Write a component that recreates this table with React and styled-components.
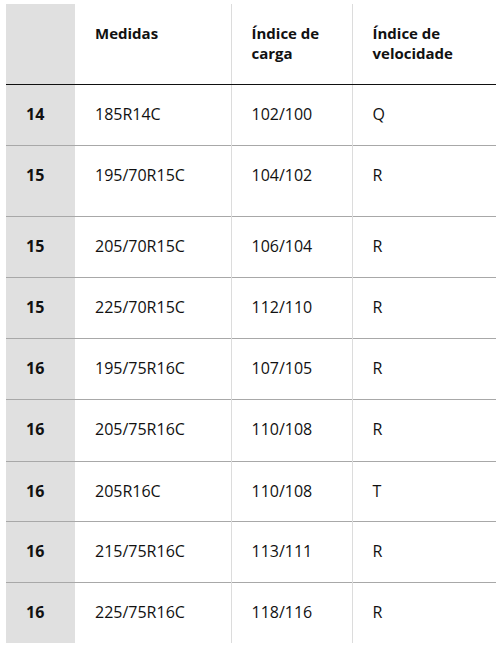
import React from "react";
import styled, { createGlobalStyle } from "styled-components";

const GlobalStyle = createGlobalStyle`
  body {
    margin: 0;
    background: #fff;
    font-family: "Open Sans", "Liberation Sans", sans-serif;
    color: #111;
  }
`;

const Wrap = styled.div`
  padding: 4px 7px 0 6px;
`;

const Table = styled.table`
  border-collapse: collapse;
  width: 490px;
  table-layout: fixed;
  font-size: 16px;

  tbody tr + tr td {
    border-top: 1px solid #a8a8a8;
  }
`;

const Head = styled.th`
  text-align: left;
  vertical-align: top;
  font-weight: 700;
  font-size: 15px;
  line-height: 20px;
  height: 80px;
  box-sizing: border-box;
  padding: 19px 20px 0 20px;
  border-bottom: 1px solid #111;
  border-left: ${(p) => (p.$divider ? "1px solid #dcdcdc" : "none")};
  background: ${(p) => (p.$shaded ? "#e0e0e0" : "transparent")};
`;

const Row = styled.tr`
  height: ${(p) => p.$h}px;
`;

const Cell = styled.td`
  vertical-align: top;
  padding: 19px 20px 0 20px;
  line-height: 20px;
  border-left: ${(p) => (p.$divider ? "1px solid #dcdcdc" : "none")};
`;

const Rim = styled.td`
  vertical-align: top;
  padding: 19px 0 0 20px;
  line-height: 20px;
  font-weight: 700;
  background: #e0e0e0;
`;

const rows = [
  ["14", "185R14C", "102/100", "Q", 61],
  ["15", "195/70R15C", "104/102", "R", 71],
  ["15", "205/70R15C", "106/104", "R", 61],
  ["15", "225/70R15C", "112/110", "R", 61],
  ["16", "195/75R16C", "107/105", "R", 61],
  ["16", "205/75R16C", "110/108", "R", 62],
  ["16", "205R16C", "110/108", "T", 60],
  ["16", "215/75R16C", "113/111", "R", 61],
  ["16", "225/75R16C", "118/116", "R", 61],
];

export default function App() {
  return (
    <Wrap>
      <GlobalStyle />
      <Table>
        <colgroup>
          <col style={{ width: 69 }} />
          <col style={{ width: 156 }} />
          <col style={{ width: 121 }} />
          <col style={{ width: 144 }} />
        </colgroup>
        <thead>
          <tr>
            <Head $shaded />
            <Head>Medidas</Head>
            <Head $divider>Índice de carga</Head>
            <Head $divider>Índice de velocidade</Head>
          </tr>
        </thead>
        <tbody>
          {rows.map(([rim, size, load, speed, h], i) => (
            <Row key={i} $h={h}>
              <Rim>{rim}</Rim>
              <Cell>{size}</Cell>
              <Cell $divider>{load}</Cell>
              <Cell $divider>{speed}</Cell>
            </Row>
          ))}
        </tbody>
      </Table>
    </Wrap>
  );
}
